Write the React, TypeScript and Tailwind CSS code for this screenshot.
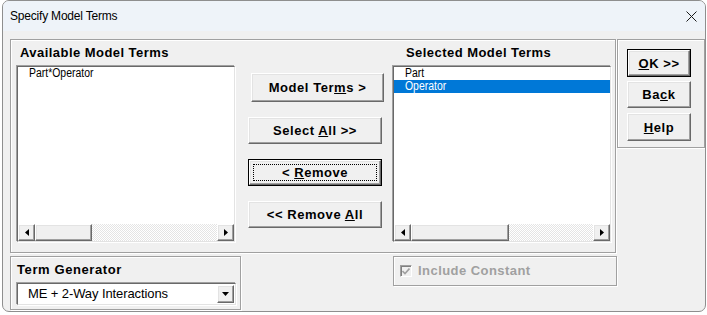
import type { ReactNode } from "react";

const ui = "font-['Liberation_Sans',Arial,sans-serif]";

function Frame({ className, children }: { className: string; children?: ReactNode }) {
  return (
    <div
      className={`border border-[#a0a0a0] shadow-[inset_1px_1px_0_#fff,1px_1px_0_#fff] ${className}`}
    >
      {children}
    </div>
  );
}

function Raised({ className, children }: { className: string; children?: ReactNode }) {
  return (
    <div
      className={`border border-t-white border-l-white border-r-[#696969] border-b-[#696969] bg-[#f0f0f0] shadow-[inset_-1px_-1px_0_#a0a0a0,inset_1px_1px_0_#e3e3e3] ${className}`}
    >
      {children}
    </div>
  );
}

function Button({
  children,
  className,
  isDefault,
  focus,
}: {
  children: ReactNode;
  className: string;
  isDefault?: boolean;
  focus?: boolean;
}) {
  const label = (
    <span className="text-[13px] font-bold tracking-[0.55px] text-black leading-[15px]">{children}</span>
  );
  if (isDefault) {
    return (
      <div className={`border border-black ${className}`}>
        <Raised className="relative flex h-full w-full items-center justify-center">
          {focus && <div className="absolute inset-[3px] border border-dotted border-black" />}
          {label}
        </Raised>
      </div>
    );
  }
  return <Raised className={`flex items-center justify-center ${className}`}>{label}</Raised>;
}

function Arrow({ dir }: { dir: "left" | "right" | "down" }) {
  if (dir === "down") {
    return (
      <svg width="7" height="4" viewBox="0 0 7 4">
        <path d="M0 0H7L3.5 4Z" fill="#000" />
      </svg>
    );
  }
  return (
    <svg width="4" height="7" viewBox="0 0 4 7">
      <path d={dir === "left" ? "M4 0V7L0 3.5Z" : "M0 0V7L4 3.5Z"} fill="#000" />
    </svg>
  );
}

function ScrollBar({ thumb }: { thumb: string }) {
  return (
    <div className="flex h-[17px]">
      <Raised className="flex w-[17px] items-center justify-center">
        <Arrow dir="left" />
      </Raised>
      <Raised className={thumb} />
      <div className="flex-1 bg-[repeating-conic-gradient(#ffffff_0%_25%,#e4e4e4_0%_50%)] bg-size-[2px_2px]" />
      <Raised className="flex w-[17px] items-center justify-center">
        <Arrow dir="right" />
      </Raised>
    </div>
  );
}

function ListBox({ items, selected, thumb }: { items: string[]; selected?: number; thumb: string }) {
  return (
    <div className="flex h-[176px] w-[218px] flex-col border border-t-[#696969] border-l-[#696969] border-r-[#e3e3e3] border-b-[#e3e3e3] bg-white shadow-[-1px_-1px_0_#a0a0a0,1px_1px_0_#fff]">
      <div className="flex-1">
        {items.map((item, i) => (
          <div
            key={item}
            className={`h-[13px] pl-[11px] text-[12px] leading-[13px] ${
              i === selected ? "bg-[#0078d7] text-white" : "text-black"
            }`}
          >
            <span className="inline-block origin-left scale-x-[0.87]">{item}</span>
          </div>
        ))}
      </div>
      <ScrollBar thumb={thumb} />
    </div>
  );
}

export default function App() {
  return (
    <div className={`h-[315px] w-[707px] overflow-hidden bg-white ${ui}`}>
      <div className="ml-[2px] flex h-[312px] w-[704px] flex-col overflow-hidden rounded-[7px] border border-[#8e8e8e] bg-[#f0f0f0]">
        <div className="flex h-[30px] items-center justify-between bg-[#eef3f9] pl-[7px] pr-[8px]">
          <span className="text-[12px] tracking-[-0.2px] text-black">Specify Model Terms</span>
          <svg width="11" height="11" viewBox="0 0 11 11" className="mt-[1px]">
            <path d="M0.5 0.5L10.5 10.5M10.5 0.5L0.5 10.5" stroke="#1a1a1a" strokeWidth="1" />
          </svg>
        </div>

        <div className="flex-1 pl-[7px] pt-[8px]">
          <div className="flex items-start">
            <Frame className="flex h-[214px] w-[606px] pl-[6px] pt-[5px]">
              <div className="w-[218px]">
                <div className="h-[15px] pl-[3px] text-[13px] font-bold tracking-[0.45px] leading-[15px]">
                  Available Model Terms
                </div>
                <div className="mt-[6px]">
                  <ListBox items={["Part*Operator"]} thumb="w-[57px]" />
                </div>
              </div>

              <div className="ml-[13px] flex w-[134px] flex-col">
                <Button className="ml-[3px] mt-[28px] h-[29px] w-[133px]">
                  Model Ter<u>m</u>s &gt;
                </Button>
                <Button className="mt-[15px] h-[27px] w-[134px]">
                  Select <u>A</u>ll &gt;&gt;
                </Button>
                <Button isDefault focus className="mt-[15px] h-[27px] w-[134px]">
                  &lt; <u>R</u>emove
                </Button>
                <Button className="mt-[15px] h-[27px] w-[134px]">
                  &lt;&lt; Remove <u>A</u>ll
                </Button>
              </div>

              <div className="ml-[11px] w-[218px]">
                <div className="h-[15px] pl-[13px] text-[13px] font-bold tracking-[0.45px] leading-[15px]">
                  Selected Model Terms
                </div>
                <div className="mt-[6px]">
                  <ListBox items={["Part", "Operator"]} selected={1} thumb="w-[98px]" />
                </div>
              </div>
            </Frame>

            <Frame className="ml-[1px] flex h-[109px] w-[88px] flex-col pl-[9px] pt-[9px]">
              <Button isDefault className="h-[28px] w-[64px]">
                <u>O</u>K &gt;&gt;
              </Button>
              <Button className="mt-[4px] h-[27px] w-[64px]">
                Ba<u>c</u>k
              </Button>
              <Button className="mt-[5px] h-[28px] w-[64px]">
                <u>H</u>elp
              </Button>
            </Frame>
          </div>

          <div className="mt-[3px] flex items-start">
            <Frame className="h-[54px] w-[231px] pl-[6px] pt-[5px]">
              <div className="h-[15px] text-[13px] font-bold tracking-[0.6px] leading-[15px]">Term Generator</div>
              <div className="mt-[6px] flex h-[22px] w-[219px] border border-t-[#696969] border-l-[#696969] border-r-[#e3e3e3] border-b-[#e3e3e3] bg-white p-[1px] shadow-[-1px_-1px_0_#a0a0a0,1px_1px_0_#fff]">
                <div className="flex flex-1 items-center pl-[9px] text-[13px] tracking-[-0.1px] text-black">
                  ME + 2-Way Interactions
                </div>
                <Raised className="flex w-[17px] items-center justify-center">
                  <Arrow dir="down" />
                </Raised>
              </div>
            </Frame>

            <Frame className="ml-[152px] flex h-[30px] w-[224px] items-center pl-[6px]">
              <div className="flex h-[12px] w-[12px] items-center justify-center border border-t-[#a0a0a0] border-l-[#a0a0a0] border-r-white border-b-white bg-[#f0f0f0] shadow-[inset_1px_1px_0_#808080]">
                <svg width="8" height="7" viewBox="0 0 8 7">
                  <path d="M0.5 3L3 5.5L7.5 0.5" stroke="#a0a0a0" strokeWidth="1.6" fill="none" />
                </svg>
              </div>
              <span className="ml-[6px] text-[13px] font-bold tracking-[0.45px] text-[#a0a0a0]">Include Constant</span>
            </Frame>
          </div>
        </div>
      </div>
    </div>
  );
}
